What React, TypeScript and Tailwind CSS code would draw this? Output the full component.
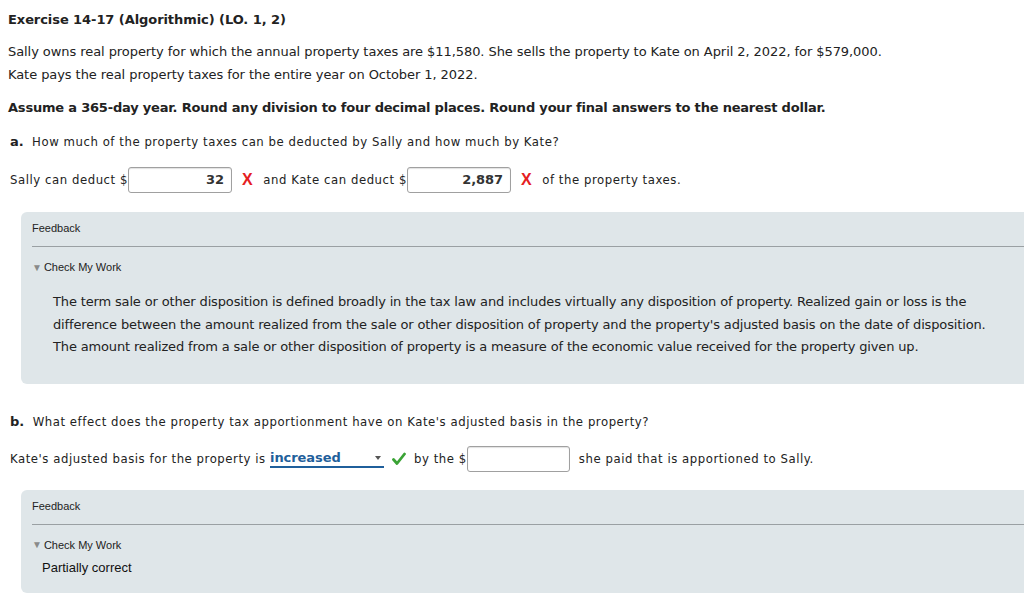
import React from 'react'

const verdana = 'font-["DejaVu_Sans",Verdana,sans-serif] tracking-[-0.07px]'
const tahoma = 'font-["DejaVu_Sans_Condensed","Liberation_Sans",sans-serif] tracking-[0.55px]'
const arial = 'font-["Liberation_Sans",Arial,sans-serif]'

function AnswerBox({ value, width = 'w-[104px]' }: { value?: string; width?: string }) {
  return (
    <span
      className={`inline-flex h-[26px] ${width} items-center justify-end rounded-[3px] border border-[#a0a0a0] bg-white px-[7px] shadow-[inset_0_1px_1px_rgba(0,0,0,0.12)] ${verdana} text-[13px] font-bold text-[#333]`}
    >
      {value}
    </span>
  )
}

function WrongMark() {
  return <span className={`mx-[10px] ${arial} text-[16px] font-bold text-[#e5201f]`}>X</span>
}

function FeedbackPanel({ children }: { children: React.ReactNode }) {
  return (
    <div className="ml-[13px] mr-[-40px] rounded-[6px] bg-[#dfe6e9]">
      <div className={`px-[11px] pt-[10px] ${arial} text-[11px] leading-[13px] text-[#222]`}>Feedback</div>
      <div className="ml-[11px] mt-[11px] h-px bg-[#9aa0a3]" />
      <div className={`flex items-center px-[11px] pt-[14px] ${arial} text-[11px] leading-[13px] text-[#222]`}>
        <span className="mr-[2px] text-[10px] leading-[10px] text-[#8a8a8a]">▼</span>Check My Work
      </div>
      {children}
    </div>
  )
}

export default function App() {
  return (
    <div className="h-[615px] w-[1024px] overflow-hidden bg-white px-2 pt-[12px] text-[#222]">
      <h1 className={`${verdana} text-[13px] font-bold leading-[16px]`}>Exercise 14-17 (Algorithmic) (LO. 1, 2)</h1>

      <p className={`mt-[12px] ${verdana} text-[13px] leading-[23px]`}>
        Sally owns real property for which the annual property taxes are $11,580. She sells the property to Kate on April 2, 2022, for $579,000.
        <br />
        Kate pays the real property taxes for the entire year on October 1, 2022.
      </p>

      <p className={`mt-[10px] font-["DejaVu_Sans",Verdana,sans-serif] tracking-[-0.2px] text-[13px] font-bold leading-[23px]`}>
        Assume a 365-day year. Round any division to four decimal places. Round your final answers to the nearest dollar.
      </p>

      <p className={`mt-[13px] pl-[2px] ${tahoma} text-[13px] leading-[20px]`}>
        <span className={`${verdana} font-bold`}>a.</span>&nbsp; How much of the property taxes can be deducted by Sally and how much by Kate?
      </p>

      <div className={`mt-[15px] flex items-center pl-[2px] ${tahoma} text-[13px]`}>
        <span>Sally can deduct $</span>
        <AnswerBox value="32" />
        <WrongMark />
        <span>and Kate can deduct $</span>
        <AnswerBox value="2,887" />
        <WrongMark />
        <span>of the property taxes.</span>
      </div>

      <div className="mt-[19px]">
        <FeedbackPanel>
          <p className={`pb-[25px] pl-[32px] pr-[61px] pt-[17px] font-["DejaVu_Sans",Verdana,sans-serif] tracking-[-0.15px] text-[13px] leading-[22.5px] text-[#222]`}>
            The term sale or other disposition is defined broadly in the tax law and includes virtually any disposition of property. Realized gain or loss is the difference between the amount realized from the sale or other disposition of property and the property's adjusted basis on the date of disposition. The amount realized from a sale or other disposition of property is a measure of the economic value received for the property given up.
          </p>
        </FeedbackPanel>
      </div>

      <p className={`mt-[28px] pl-[2px] ${tahoma} text-[13px] leading-[20px]`}>
        <span className={`${verdana} font-bold`}>b.</span>&nbsp; What effect does the property tax apportionment have on Kate's adjusted basis in the property?
      </p>

      <div className={`mt-[14px] flex items-center pl-[2px] ${tahoma} text-[13px]`}>
        <span>Kate's adjusted basis for the property is&nbsp;</span>
        <span className="relative flex h-[18px] w-[114px] items-center border-b-2 border-[#1f5f9b]">
          <span className={`${verdana} text-[13px] font-bold leading-[16px] text-[#1f5f9b]`}>increased</span>
          <span className="absolute right-[3px] top-[6px] h-0 w-0 border-x-[3px] border-t-[4px] border-x-transparent border-t-[#555]" />
        </span>
        <svg className="mx-[8px]" width="14" height="14" viewBox="0 0 14 14">
          <path d="M1.5 7.5 L5 11.5 L12.5 2" fill="none" stroke="#3aa335" strokeWidth="2.8" strokeLinecap="round" strokeLinejoin="round" />
        </svg>
        <span>by the $</span>
        <AnswerBox width="w-[103px]" />
        <span className="ml-[9px]">she paid that is apportioned to Sally.</span>
      </div>

      <div className="mt-[18px]">
        <FeedbackPanel>
          <p className={`pb-[17px] pl-[21px] pt-[8px] ${arial} text-[13px] leading-[16px] text-[#111]`}>Partially correct</p>
        </FeedbackPanel>
      </div>
    </div>
  )
}
